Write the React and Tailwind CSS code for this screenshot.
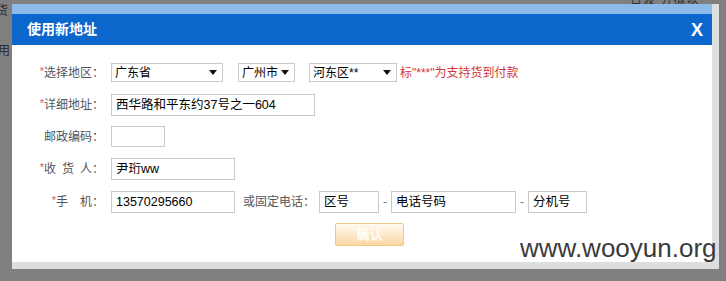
import React from "react";

const cjk = { fontFamily: '"Liberation Sans", "Noto Sans CJK SC", sans-serif' };

function Star() {
  return <span className="text-[#e05a5a] text-[11px] relative top-[-2px]">*</span>;
}

function Label({ children }) {
  return (
    <div className="w-[92px] shrink-0 text-right text-[12px] text-[#555] whitespace-pre" style={cjk}>
      {children}
    </div>
  );
}

function Select({ w, text }) {
  return (
    <div
      className={`${w} h-[19px] border border-[#c9c9c9] bg-white flex items-center justify-between pl-[3px] pr-[5px] text-[12px] text-black`}
      style={cjk}
    >
      <span>{text}</span>
      <svg width="8" height="5" viewBox="0 0 8 5" className="shrink-0">
        <path d="M0 0 L8 0 L4 5 Z" fill="#111" />
      </svg>
    </div>
  );
}

function Input({ w, h = "h-[22px]", text }) {
  return (
    <div
      className={`${w} ${h} border border-[#c9c9c9] bg-white flex items-center pl-[4px] text-[12.5px] text-black`}
      style={cjk}
    >
      {text}
    </div>
  );
}

export default function App() {
  return (
    <div className="relative w-[726px] h-[281px] bg-[#7f7f7f] overflow-hidden" style={cjk}>
      {/* page behind overlay */}
      <span className="absolute left-[-4px] top-[2px] text-[12px] text-[#2a2a2a]">货</span>
      <span className="absolute left-[-2px] top-[42px] text-[12px] text-[#2a2a2a]">用</span>
      <span className="absolute left-[630px] top-[-9px] text-[12px] text-[#333] tracking-[1px]">日波 分拟以</span>

      {/* dialog */}
      <div className="absolute left-[12px] top-[4px] w-[707px] h-[265px] bg-[#dedede] pr-[7px] pb-[7px] flex flex-col">
        <div className="h-[10px] bg-[#8dbbe9]" />
        <div className="h-[31px] bg-[#0b67cb] flex items-center justify-between pl-[15px] pr-[9px]">
          <span className="text-white font-bold text-[14px]">使用新地址</span>
          <span className="text-white font-bold text-[18px] leading-none" style={{ fontFamily: '"Liberation Sans", sans-serif' }}>X</span>
        </div>
        <div className="flex-1 bg-white flex flex-col">
          {/* row 1 */}
          <div className="flex items-center h-[19px] mt-[18px]">
            <Label><Star />选择地区：</Label>
            <div className="ml-[7px]"><Select w="w-[112px]" text="广东省" /></div>
            <div className="ml-[15px]"><Select w="w-[57px]" text="广州市" /></div>
            <div className="ml-[14px]"><Select w="w-[88px]" text="河东区**" /></div>
            <span className="ml-[3px] text-[12px] text-[#d0343a]">标"***"为支持货到付款</span>
          </div>
          {/* row 2 */}
          <div className="flex items-center h-[22px] mt-[12px]">
            <Label><Star />详细地址：</Label>
            <div className="ml-[7px]"><Input w="w-[204px]" text="西华路和平东约37号之一604" /></div>
          </div>
          {/* row 3 */}
          <div className="flex items-center h-[21px] mt-[10px]">
            <Label>邮政编码：</Label>
            <div className="ml-[7px]"><Input w="w-[54px]" h="h-[21px]" text="" /></div>
          </div>
          {/* row 4 */}
          <div className="flex items-center h-[22px] mt-[11px]">
            <Label><Star />收{"\u2002"}货{"\u2002"}人：</Label>
            <div className="ml-[7px]"><Input w="w-[124px]" text="尹珩ww" /></div>
          </div>
          {/* row 5 */}
          <div className="flex items-center h-[22px] mt-[11px]">
            <Label><Star />手{"\u3000"}机：</Label>
            <div className="ml-[7px]"><Input w="w-[124px]" text="13570295660" /></div>
            <span className="ml-[8px] w-[72px] text-[12px] text-[#555]">或固定电话：</span>
            <div className="ml-[4px]"><Input w="w-[60px]" text="区号" /></div>
            <span className="w-[12px] text-center text-[12px] text-[#777]">-</span>
            <Input w="w-[125px]" text="电话号码" />
            <span className="w-[12px] text-center text-[12px] text-[#777]">-</span>
            <Input w="w-[59px]" text="分机号" />
          </div>
          {/* button */}
          <div className="flex mt-[10px]">
            <div className="ml-[323px] w-[69px] h-[23px] rounded-[2px] border border-[#efc68d] bg-gradient-to-b from-[#fffaf1] to-[#fbd7a2] flex items-center justify-center text-[13px] font-bold text-[#fffdf8]">
              确认
            </div>
          </div>
        </div>
      </div>

      {/* watermark */}
      <span
        className="absolute left-[520px] top-[233px] text-[26px] leading-[30px] text-[#3b3b3b]"
        style={{ fontFamily: '"Liberation Sans", sans-serif' }}
      >
        www.wooyun.org
      </span>
    </div>
  );
}
